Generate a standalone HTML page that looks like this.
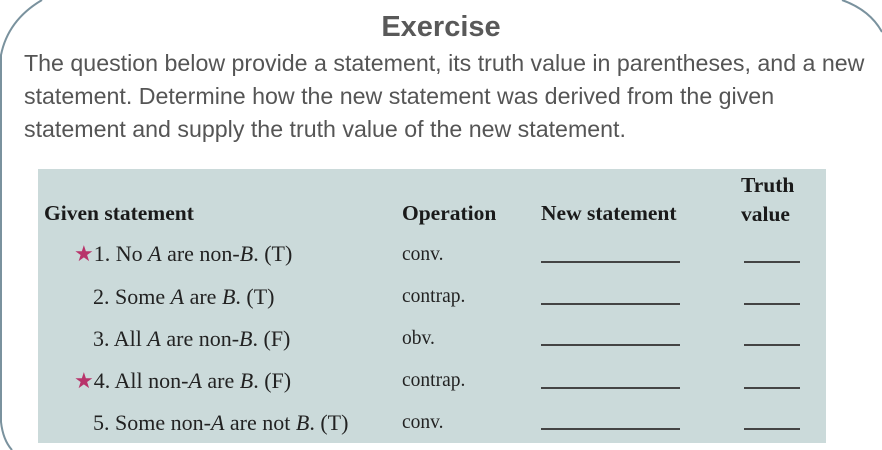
<!DOCTYPE html>
<html><head><style>
html,body{margin:0;width:882px;height:450px;overflow:hidden}
body{background:#fff;position:relative;font-family:"Liberation Sans",sans-serif}
svg.f{position:absolute;left:0;top:0}
h1{position:absolute;top:11px;left:0;width:882px;text-align:center;margin:0;font-size:29px;font-weight:bold;color:#595959}
.p{position:absolute;left:24px;top:47px;width:856px;font-size:23.2px;line-height:33px;color:#555}
.tbl{position:absolute;left:38px;top:169px;width:788px;height:274px;background:#cbdada;font-family:"Liberation Serif",serif;color:#222}
.t{position:absolute;font-size:22px;white-space:nowrap}
.b{font-weight:bold;color:#1a1a1a;font-size:21.5px}
.l{position:absolute;height:2px;background:#444}
.op{font-size:19.5px}
.star{color:#b8336a}
</style></head><body>
<svg class="f" width="882" height="450" viewBox="0 0 882 450" fill="none" stroke="#7a929e" stroke-width="2">
<path d="M42,0 Q8,20 1,55 L1,422 Q3,440 12,450"/>
<path d="M842,0 Q870,10 882,32"/>
</svg>
<h1>Exercise</h1>
<div class="p">The question below provide a statement, its truth value in parentheses, and a new statement. Determine how the new statement was derived from the given statement and supply the truth value of the new statement.</div>
<div class="tbl">
<div class="t b" style="left:6px;top:32px">Given statement</div>
<div class="t b" style="left:364px;top:32px">Operation</div>
<div class="t b" style="left:503px;top:32px">New statement</div>
<div class="t b" style="left:703px;top:2px;line-height:29px">Truth<br>value</div>
<div class="t" style="left:36px;top:72px"><span class="star">★</span>1. No <i>A</i> are non-<i>B</i>. (T)</div>
<div class="t" style="left:55px;top:115px">2. Some <i>A</i> are <i>B</i>. (T)</div>
<div class="t" style="left:55px;top:157px">3. All <i>A</i> are non-<i>B</i>. (F)</div>
<div class="t" style="left:36px;top:199px"><span class="star">★</span>4. All non-<i>A</i> are <i>B</i>. (F)</div>
<div class="t" style="left:55px;top:241px">5. Some non-<i>A</i> are not <i>B</i>. (T)</div>
<div class="t op" style="left:364px;top:75px">conv.</div>
<div class="t op" style="left:364px;top:117px">contrap.</div>
<div class="t op" style="left:364px;top:159px">obv.</div>
<div class="t op" style="left:364px;top:201px">contrap.</div>
<div class="t op" style="left:364px;top:243px">conv.</div>
<div class="l" style="left:503px;width:139px;top:92px"></div><div class="l" style="left:706px;width:56px;top:92px"></div>
<div class="l" style="left:503px;width:139px;top:134px"></div><div class="l" style="left:706px;width:56px;top:134px"></div>
<div class="l" style="left:503px;width:139px;top:175px"></div><div class="l" style="left:706px;width:56px;top:175px"></div>
<div class="l" style="left:503px;width:139px;top:218px"></div><div class="l" style="left:706px;width:56px;top:218px"></div>
<div class="l" style="left:503px;width:139px;top:259px"></div><div class="l" style="left:706px;width:56px;top:259px"></div>
</div>
</body></html>
